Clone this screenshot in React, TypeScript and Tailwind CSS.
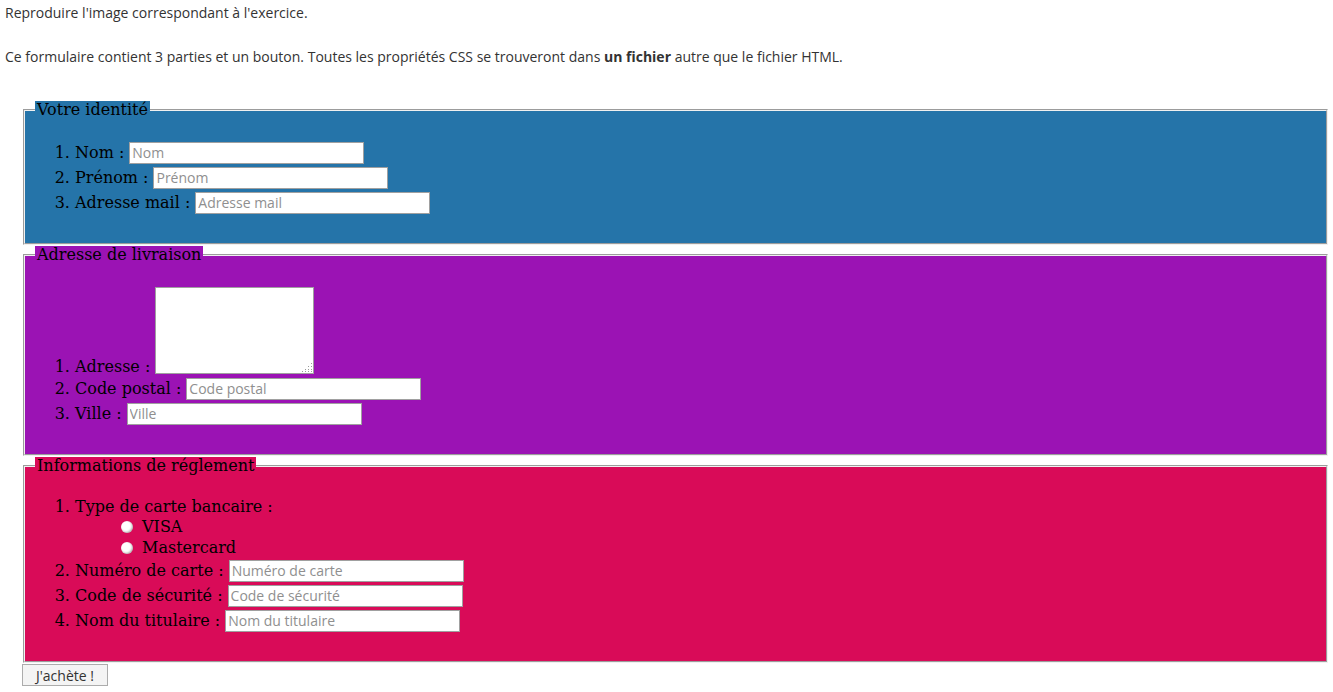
const inputCls =
  "h-[22px] w-[235px] border border-[#a0a0a0] bg-white px-[2px] font-['Open_Sans',sans-serif] text-[14px] text-black outline-none placeholder:text-[#8f8f8f]";

function Field({ label, placeholder }: { label: string; placeholder: string }) {
  return (
    <li className="h-[25px]">
      <div className="flex h-full items-center">
        <span className="leading-[25px]">{label}</span>
        <input type="text" placeholder={placeholder} className={"ml-[5px] " + inputCls} />
      </div>
    </li>
  );
}

function Radio({ label }: { label: string }) {
  return (
    <li className="flex h-[21px] items-center">
      <input
        type="radio"
        name="carte"
        className="size-[12px] appearance-none rounded-full bg-white shadow-[inset_-1px_-1px_2px_rgba(0,0,0,0.3)]"
      />
      <span className="ml-[9px] leading-[21px]">{label}</span>
    </li>
  );
}

// poignée de redimensionnement en pointillés
function Grip() {
  return (
    <svg width="10" height="10" viewBox="0 0 10 10" className="pointer-events-none absolute bottom-[2px] right-[2px]">
      {[
        [9, 1],
        [6, 4],
        [9, 4],
        [3, 7],
        [6, 7],
        [9, 7],
        [0, 9],
        [3, 9],
        [6, 9],
        [9, 9],
      ].map(([x, y], i) => (
        <rect key={i} x={x} y={y} width="1" height="1" fill="#9a9a9a" />
      ))}
    </svg>
  );
}

export default function App() {
  return (
    <div className="min-h-screen bg-white pb-4">
      <div className="px-[5px] pt-[3px] font-['Open_Sans',sans-serif] text-[14px] leading-[20px] text-[#333]">
        <p>Reproduire l'image correspondant à l'exercice.</p>
        <p className="mt-[24px]">
          Ce formulaire contient 3 parties et un bouton. Toutes les propriétés CSS se trouveront dans{" "}
          <b>un fichier</b> autre que le fichier HTML.
        </p>
      </div>

      <form className="ml-[21px] mr-[3px] mt-[34px] font-['DejaVu_Serif',serif] text-[16px] text-black">
        <fieldset className="mx-[2px] border-2 border-[#f0f0f0] [border-style:groove] bg-[#2574a9] px-[10px] pt-[5px] pb-[12px]">
          <legend className="bg-[#2574a9] px-[2px] leading-[18px]">Votre identité</legend>
          <ol className="my-4 list-decimal pl-10">
            <Field label="Nom :" placeholder="Nom" />
            <Field label="Prénom :" placeholder="Prénom" />
            <Field label="Adresse mail :" placeholder="Adresse mail" />
          </ol>
        </fieldset>

        <fieldset className="mx-[2px] mt-[1px] border-2 border-[#f0f0f0] [border-style:groove] bg-[#9b13b4] px-[10px] pt-[5px] pb-[12px]">
          <legend className="bg-[#9b13b4] px-[2px] leading-[18px]">Adresse de livraison</legend>
          <ol className="my-4 list-decimal pl-10">
            <li className="h-[91px]">
              <div className="flex h-full items-end">
                <span className="mb-[-3px] leading-[25px]">Adresse :</span>
                <div className="relative mb-[2px] ml-[5px]">
                  <textarea className="block h-[87px] w-[159px] resize-none border border-[#a0a0a0] bg-white outline-none" />
                  <Grip />
                </div>
              </div>
            </li>
            <Field label="Code postal :" placeholder="Code postal" />
            <Field label="Ville :" placeholder="Ville" />
          </ol>
        </fieldset>

        <fieldset className="mx-[2px] mt-[1px] border-2 border-[#f0f0f0] [border-style:groove] bg-[#d90b58] px-[10px] pt-[4px] pb-[12px]">
          <legend className="bg-[#d90b58] px-[2px] leading-[18px]">Informations de réglement</legend>
          <ol className="my-4 list-decimal pl-10">
            <li>
              <div className="h-[19px] leading-[19px]">Type de carte bancaire :</div>
              <ul className="list-none pl-[46px]">
                <Radio label="VISA" />
                <Radio label="Mastercard" />
              </ul>
            </li>
            <Field label="Numéro de carte :" placeholder="Numéro de carte" />
            <Field label="Code de sécurité :" placeholder="Code de sécurité" />
            <Field label="Nom du titulaire :" placeholder="Nom du titulaire" />
          </ol>
        </fieldset>

        <button
          type="submit"
          className="ml-[1px] mt-[1px] h-[22px] w-[86px] border border-[#acacac] bg-[#f4f4f4] font-['Open_Sans',sans-serif] text-[14px] text-[#333]"
        >
          J'achète !
        </button>
      </form>
    </div>
  );
}
